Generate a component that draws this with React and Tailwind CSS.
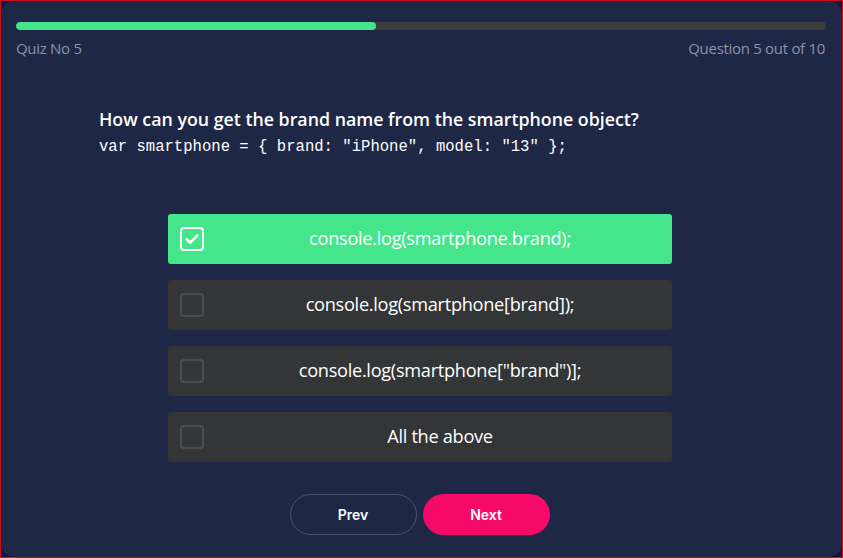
const OPTIONS = [
  { text: 'console.log(smartphone.brand);', checked: true },
  { text: 'console.log(smartphone[brand]);' },
  { text: 'console.log(smartphone["brand")];' },
  { text: 'All the above' },
];

function CheckBox({ checked }) {
  if (checked) {
    return (
      <span className="w-6 h-6 shrink-0 rounded-[4px] border-2 border-white flex items-center justify-center">
        <svg viewBox="0 0 24 24" className="w-[18px] h-[18px]" fill="none" stroke="white" strokeWidth="3.6" strokeLinecap="round" strokeLinejoin="round">
          <path d="M5 12.5l4.5 4.5L19 7.5" />
        </svg>
      </span>
    );
  }
  return <span className="w-6 h-6 shrink-0 rounded-[4px] border-2 border-[#4a4c4f]" />;
}

export default function App() {
  return (
    <div className="w-[843px] h-[558px] border border-[#c8101a] bg-[#191142] font-['Open_Sans',sans-serif]">
      <div className="h-full rounded-[14px] bg-[#1e2746] pt-[21px] pl-[15px] pr-[16px] flex flex-col">
        <div className="h-[8px] rounded-full bg-[#3b3f3e] overflow-hidden">
          <div className="h-full w-[44.4%] rounded-full bg-[#45e68b]" />
        </div>
        <div className="flex justify-between mt-[7px] text-[15px] text-[#8c93aa] tracking-[-0.3px]">
          <span>Quiz No 5</span>
          <span className="mr-[1px]">Question 5 out of 10</span>
        </div>

        <div className="pl-[83px] mt-[48px]">
          <h2 className="text-[17.8px] font-semibold text-white leading-[22px]">
            How can you get the brand name from the smartphone object?
          </h2>
          <p className="font-['Liberation_Mono',monospace] text-[15.6px] text-white leading-[22px] mt-[6px]">
            var smartphone = {'{'} brand: "iPhone", model: "13" {'}'};
          </p>
        </div>

        <div className="flex flex-col gap-4 w-[504px] ml-[152px] mt-[56px]">
          {OPTIONS.map((opt) => (
            <div
              key={opt.text}
              className={
                'h-[50px] rounded-[3px] flex items-center pl-3 ' +
                (opt.checked ? 'bg-[#45e68b]' : 'bg-[#333537]')
              }
            >
              <CheckBox checked={opt.checked} />
              <span className="flex-1 ml-1 text-center text-[18.2px] text-white tracking-[-0.3px]">
                {opt.text}
              </span>
            </div>
          ))}
        </div>

        <div className="flex justify-center gap-[6px] mt-8 mr-[3px] font-['Inter',sans-serif]">
          <button className="w-[127px] h-[41px] rounded-full border border-[#4d566e] text-white text-[14px] font-semibold">
            Prev
          </button>
          <button className="w-[127px] h-[41px] rounded-full bg-[#f50a68] text-white text-[14px] font-semibold">
            Next
          </button>
        </div>
      </div>
    </div>
  );
}
